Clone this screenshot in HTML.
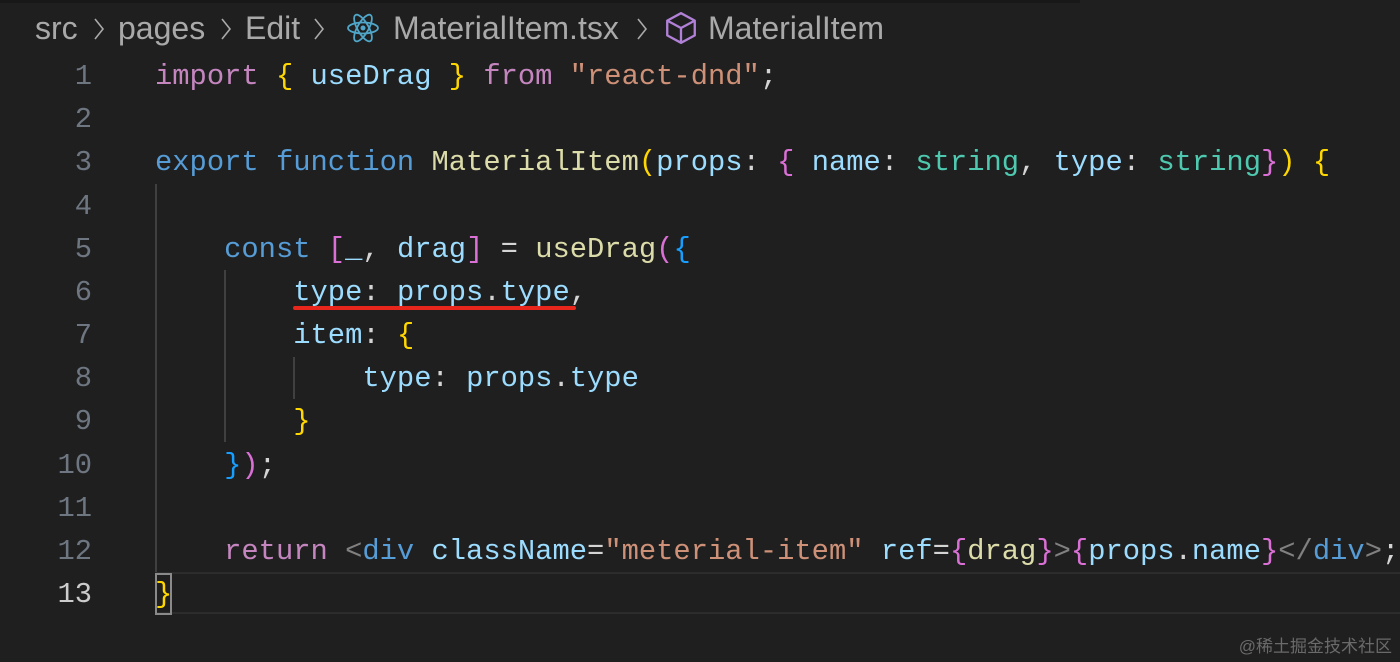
<!DOCTYPE html>
<html><head><meta charset="utf-8"><style>
body{margin:0;width:1400px;height:662px;background:#1f1f1f;overflow:hidden;position:relative;font-family:"Liberation Mono",monospace}
.top{position:absolute;left:0;top:0;width:1080px;height:3px;background:#181818}
.bc{position:absolute;top:8px;font-family:"Liberation Sans",sans-serif;font-size:32px;color:#a9a9a9;white-space:pre;line-height:40px}
.chev{position:absolute;top:16px}
.ln{position:absolute;left:0;width:92px;text-align:right;font-size:28.8px;color:#6e7681;line-height:43px}
.cd{position:absolute;left:155px;font-size:28.8px;color:#d4d4d4;white-space:pre;line-height:43px}
.k{color:#c586c0}.v{color:#9cdcfe}.s{color:#ce9178}.t{color:#4ec9b0}.f{color:#dcdcaa}.b{color:#569cd6}.y{color:#ffd700}.m{color:#da70d6}.bl{color:#179fff}.g{color:#808080}
.guide{position:absolute;width:2px;background:#404040}
.wm{position:absolute;right:8px;top:632px;font-family:"Liberation Sans","Noto Sans CJK SC",sans-serif;font-size:17px;color:#6a6a6a}
</style></head><body>
<div class="top"></div>
<div class="bc" style="left:35px">src</div>
<svg class="chev" style="left:92px" width="14" height="26" viewBox="0 0 14 26"><path d="M3 3 L11 13 L3 23" fill="none" stroke="#a9a9a9" stroke-width="1.6"/></svg>
<div class="bc" style="left:118px">pages</div>
<svg class="chev" style="left:219px" width="14" height="26" viewBox="0 0 14 26"><path d="M3 3 L11 13 L3 23" fill="none" stroke="#a9a9a9" stroke-width="1.6"/></svg>
<div class="bc" style="left:245px">Edit</div>
<svg class="chev" style="left:312px" width="14" height="26" viewBox="0 0 14 26"><path d="M3 3 L11 13 L3 23" fill="none" stroke="#a9a9a9" stroke-width="1.6"/></svg>
<svg style="position:absolute;left:346px;top:12px" width="34" height="32" viewBox="0 0 34 32"><g fill="none" stroke="#4fa6c9" stroke-width="1.8"><ellipse cx="17" cy="16" rx="15" ry="5.5"/><ellipse cx="17" cy="16" rx="15" ry="5.5" transform="rotate(60 17 16)"/><ellipse cx="17" cy="16" rx="15" ry="5.5" transform="rotate(-60 17 16)"/></g><circle cx="17" cy="16" r="2.5" fill="#4fa6c9"/></svg>
<div class="bc" style="left:393px">MaterialItem.tsx</div>
<svg class="chev" style="left:635px" width="14" height="26" viewBox="0 0 14 26"><path d="M3 3 L11 13 L3 23" fill="none" stroke="#a9a9a9" stroke-width="1.6"/></svg>
<svg style="position:absolute;left:664px;top:10px" width="34" height="36" viewBox="0 0 32 34"><g fill="none" stroke="#b180d7" stroke-width="2.2" stroke-linejoin="round"><path d="M16 3 L29 10 V24 L16 31 L3 24 V10 Z"/><path d="M3 10 L16 17 L29 10 M16 17 V31"/></g></svg>
<div class="bc" style="left:708px">MaterialItem</div>

<div style="position:absolute;left:155px;top:572px;width:1245px;height:42px;border-top:2px solid #2c2c2c;border-bottom:2px solid #2c2c2c;box-sizing:border-box"></div>
<div class="guide" style="left:155px;top:184px;height:388px"></div>
<div class="guide" style="left:224px;top:270px;height:172px"></div>
<div class="guide" style="left:293px;top:357px;height:42px"></div>
<div style="position:absolute;left:293px;top:306px;width:283px;height:4px;background:#e8261c;border-radius:2px"></div>
<div style="position:absolute;left:155px;top:573px;width:17px;height:42px;border:2px solid #8a8a8a;box-sizing:border-box"></div>

<div class="ln" style="top:55px">1</div>
<div class="ln" style="top:98px">2</div>
<div class="ln" style="top:141px">3</div>
<div class="ln" style="top:185px">4</div>
<div class="ln" style="top:228px">5</div>
<div class="ln" style="top:271px">6</div>
<div class="ln" style="top:314px">7</div>
<div class="ln" style="top:357px">8</div>
<div class="ln" style="top:400px">9</div>
<div class="ln" style="top:444px">10</div>
<div class="ln" style="top:487px">11</div>
<div class="ln" style="top:530px">12</div>
<div class="ln" style="top:573px;color:#cccccc">13</div>

<div class="cd" style="top:55px"><span class="k">import</span> <span class="y">{</span> <span class="v">useDrag</span> <span class="y">}</span> <span class="k">from</span> <span class="s">"react-dnd"</span>;</div>
<div class="cd" style="top:141px"><span class="b">export</span> <span class="b">function</span> <span class="f">MaterialItem</span><span class="y">(</span><span class="v">props</span>: <span class="m">{</span> <span class="v">name</span>: <span class="t">string</span>, <span class="v">type</span>: <span class="t">string</span><span class="m">}</span><span class="y">)</span> <span class="y">{</span></div>
<div class="cd" style="top:228px">    <span class="b">const</span> <span class="m">[</span><span class="v">_</span>, <span class="v">drag</span><span class="m">]</span> = <span class="f">useDrag</span><span class="m">(</span><span class="bl">{</span></div>
<div class="cd" style="top:271px">        <span class="v">type</span>: <span class="v">props</span>.<span class="v">type</span>,</div>
<div class="cd" style="top:314px">        <span class="v">item</span>: <span class="y">{</span></div>
<div class="cd" style="top:357px">            <span class="v">type</span>: <span class="v">props</span>.<span class="v">type</span></div>
<div class="cd" style="top:400px">        <span class="y">}</span></div>
<div class="cd" style="top:444px">    <span class="bl">}</span><span class="m">)</span>;</div>
<div class="cd" style="top:530px">    <span class="k">return</span> <span class="g">&lt;</span><span class="b">div</span> <span class="v">className</span>=<span class="s">"meterial-item"</span> <span class="v">ref</span>=<span class="m">{</span><span class="f">drag</span><span class="m">}</span><span class="g">&gt;</span><span class="m">{</span><span class="v">props</span>.<span class="v">name</span><span class="m">}</span><span class="g">&lt;/</span><span class="b">div</span><span class="g">&gt;</span>;</div>
<div class="cd" style="top:573px"><span class="y">}</span></div>

<div class="wm">@稀土掘金技术社区</div>
</body></html>
